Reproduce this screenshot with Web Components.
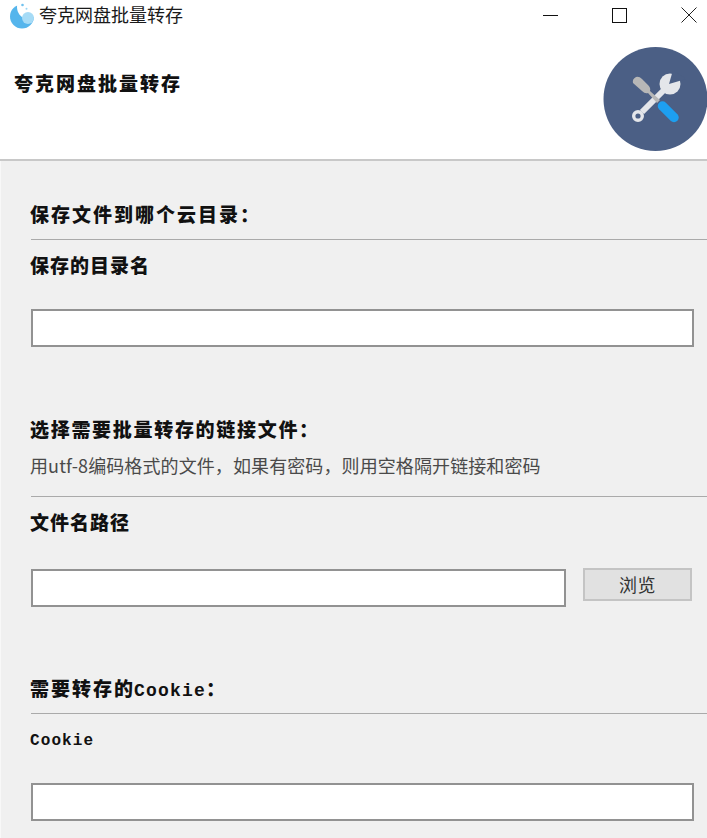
<!DOCTYPE html>
<html lang="zh-CN"><head><meta charset="utf-8"><title>夸克网盘批量转存</title>
<style>
html,body{margin:0;padding:0;background:#fff}
body{width:707px;height:838px;overflow:hidden;font-family:"Noto Sans CJK SC","Noto Sans",sans-serif}
.m{font-family:"Liberation Mono",monospace;font-size:18px;letter-spacing:1.200px;margin-left:-1px}
</style></head><body>
<app-window>
  <title-bar slot="title">夸克网盘批量转存</title-bar>
  <app-banner slot="banner">夸克网盘批量转存</app-banner>
  <form-section style="--head-top:41px;--line-top:13px;--ls:2px">
    <span slot="title">保存文件到哪个云目录：</span>
    <form-field label="保存的目录名" style="--w:663px;--gap:32px;--lt:13px"></form-field>
  </form-section>
  <form-section style="--head-top:70px;--line-top:20px;--ls:1.700px">
    <span slot="title">选择需要批量转存的链接文件：</span>
    <span slot="hint">用utf-8编码格式的文件，如果有密码，则用空格隔开链接和密码</span>
    <form-field label="文件名路径" button="浏览" style="--w:535px;--gap:35px;--lt:13px"></form-field>
  </form-section>
  <form-section style="--head-top:69px;--line-top:13px;--ls:2px">
    <span slot="title">需要转存的<span class="m">Cookie</span>：</span>
    <form-field label="Cookie" mono style="--w:663px;--gap:30px;--lt:15px"></form-field>
  </form-section>
</app-window>
<script>
const def=(name,html)=>customElements.define(name,class extends HTMLElement{
  connectedCallback(){ if(this.shadowRoot)return; const r=this.attachShadow({mode:'open'}); r.innerHTML=typeof html==='function'?html(this):html; }
});
def('app-window',`<style>
:host{display:block;width:707px;height:838px;overflow:hidden;background:#fff}
.body{background:#f0f0f0;height:677px;border-left:1px solid #f8f8f8;box-sizing:border-box;overflow:hidden}
</style><slot name="title"></slot><slot name="banner"></slot><div class="body"><slot></slot></div>`);
def('title-bar',`<style>
:host{display:flex;align-items:center;height:32px;background:#fff;color:#1a1a1a;font-size:18px;line-height:32px}
svg{display:block;flex:none}
.logo{margin:0 5px 0 9px}
.txt{flex:1;white-space:nowrap;position:relative;top:-2px}
.btns{display:flex}
.b{width:46px;height:32px;display:flex;align-items:center;justify-content:center;position:relative;top:-1px}
.b:nth-child(1){margin-right:23px}
.b:nth-child(2){margin-right:24px}
.b:nth-child(3){margin-right:-5px}
</style>
<svg class="logo" width="25" height="27" viewBox="0 0 25 27"><circle cx="13" cy="13.500" r="12" fill="#55b5ec"/><path d="M8.500 0C7 6 9 11 13 14c2 1.500 4 1.500 6 0h6V0z" fill="#fff"/><circle cx="19" cy="15" r="6" fill="#a6dbf6"/><circle cx="13.500" cy="2" r="1.300" fill="#6fc1ee"/><circle cx="17.500" cy="5.800" r="1" fill="#9ad6f5"/></svg>
<span class="txt"><slot></slot></span>
<div class="btns">
<div class="b"><svg width="15" height="15" viewBox="0 0 15 15"><path d="M0 7.500h15" stroke="#111" fill="none"/></svg></div>
<div class="b"><svg width="15" height="15" viewBox="0 0 15 15"><rect x=".5" y=".5" width="14" height="14" stroke="#111" fill="none"/></svg></div>
<div class="b"><svg width="16" height="16" viewBox="0 0 16 16"><path d="M.5.500l15 15M15.500.500l-15 15" stroke="#222" fill="none"/></svg></div>
</div>`);
def('app-banner',`<style>
:host{display:flex;justify-content:space-between;height:129px;background:#fff;border-bottom:2px solid #c8c8c8;box-sizing:border-box;overflow:hidden;position:relative}
.t{margin:37px 0 0 14px;font-size:19px;line-height:28px;font-weight:900;letter-spacing:2px;color:#111;white-space:nowrap;height:28px}
svg{position:absolute;right:-1px;top:14px}
</style><div class="t"><slot></slot></div>
<svg width="105" height="106" viewBox="0 0 105 106">
<circle cx="52.500" cy="53" r="52" fill="#4b5f85"/>
<circle cx="67" cy="38" r="10.500" fill="#e4e6ea"/>
<path d="M66 38L70 24 83 33z" fill="#4b5f85"/>
<path d="M39 66L61 44" stroke="#e4e6ea" stroke-width="6" fill="none"/>
<circle cx="35" cy="70" r="4.300" stroke="#e4e6ea" stroke-width="3.400" fill="none"/>
<path d="M59.500 60L71 71.500" stroke="#1d9ff0" stroke-width="9.500" stroke-linecap="round" fill="none"/>
<path d="M30 37Q29 33 33 31 36 30 39 33L45 39Q48 42 47 45L57 54 54 57 45 47Q42 48 39 45z" fill="#b7b7b7"/>
</svg>`);
def('form-section',`<style>
:host{display:block;padding-left:29px;color:#111}
.h{margin-top:var(--head-top);font-size:19px;line-height:24px;height:24px;font-weight:900;letter-spacing:var(--ls);white-space:nowrap}
.line{height:1px;background:#aaa;margin:var(--line-top) 0 0 1px}
slot[name=hint]::slotted(*){display:block;margin-top:13px;font-size:18px;line-height:22px;font-weight:400;color:#4a4a4a;white-space:nowrap;letter-spacing:.1px}
</style>
<div class="h"><slot name="title"></slot></div><slot name="hint"></slot><div class="line"></div><slot></slot>`);
def('form-field',el=>{
  const mono=el.hasAttribute('mono'), btn=el.getAttribute('button');
  return `<style>
:host{display:block;color:#111}
.l{margin:var(--lt) 0 0 0;height:24px;font-size:${mono?'16px':'19px'};line-height:24px;font-weight:${mono?700:900};letter-spacing:${mono?'1.100px':'1px'};white-space:nowrap;${mono?'font-family:"Liberation Mono",monospace;':''}}
.r{display:flex;align-items:flex-start;margin:var(--gap) 0 0 1px}
.i{width:var(--w);height:38px;box-sizing:border-box;border:2px solid #929292;background:#fff;flex:none}
.b{width:109px;height:33px;box-sizing:border-box;margin:-1px 0 0 17px;border:2px solid #c4c4c4;background:#e1e1e1;color:#333;font-size:18px;line-height:29px;text-align:center;letter-spacing:.5px;flex:none}
</style><div class="l">${el.getAttribute('label')}</div><div class="r"><div class="i"></div>${btn?`<div class="b">${btn}</div>`:''}</div>`;
});
</script>
</body></html>
